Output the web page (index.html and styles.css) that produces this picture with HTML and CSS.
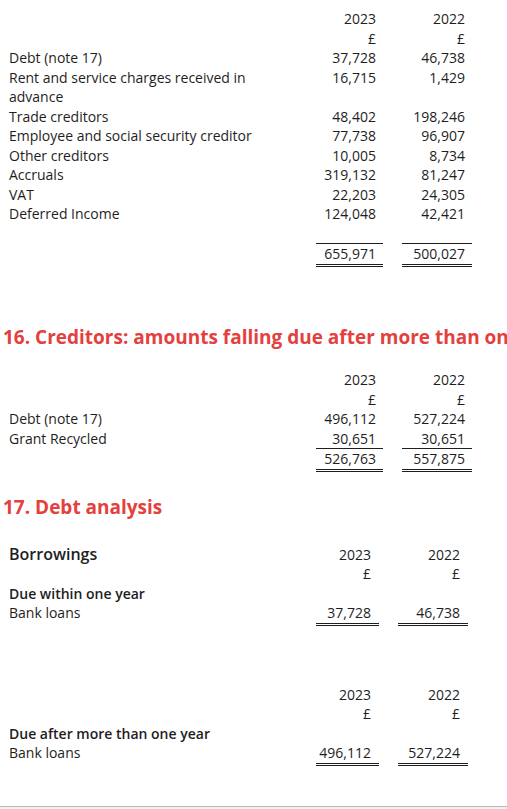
FILE: index.html
```html
<!DOCTYPE html>
<html lang="en">
<head>
<meta charset="utf-8">
<title>Creditors and debt analysis</title>
<link rel="stylesheet" href="styles.css">
</head>
<body>
<div class="page">
  <table class="fin fin-a">
    <tr><td class="label"></td><td class="spacer"></td><td class="num">2023</td><td class="gap"></td><td class="num n2">2022</td></tr>
    <tr><td class="label"></td><td class="spacer"></td><td class="num">£</td><td class="gap"></td><td class="num n2">£</td></tr>
    <tr><td class="label">Debt (note 17)</td><td class="spacer"></td><td class="num">37,728</td><td class="gap"></td><td class="num n2">46,738</td></tr>
    <tr><td class="label">Rent and service charges received in advance</td><td class="spacer"></td><td class="num">16,715</td><td class="gap"></td><td class="num n2">1,429</td></tr>
    <tr><td class="label">Trade creditors</td><td class="spacer"></td><td class="num">48,402</td><td class="gap"></td><td class="num n2">198,246</td></tr>
    <tr><td class="label">Employee and social security creditor</td><td class="spacer"></td><td class="num">77,738</td><td class="gap"></td><td class="num n2">96,907</td></tr>
    <tr><td class="label">Other creditors</td><td class="spacer"></td><td class="num">10,005</td><td class="gap"></td><td class="num n2">8,734</td></tr>
    <tr><td class="label">Accruals</td><td class="spacer"></td><td class="num">319,132</td><td class="gap"></td><td class="num n2">81,247</td></tr>
    <tr><td class="label">VAT</td><td class="spacer"></td><td class="num">22,203</td><td class="gap"></td><td class="num n2">24,305</td></tr>
    <tr><td class="label">Deferred Income</td><td class="spacer"></td><td class="num">124,048</td><td class="gap"></td><td class="num n2">42,421</td></tr>
    <tr><td class="label"></td><td class="spacer"></td><td class="num"></td><td class="gap"></td><td class="num n2"></td></tr>
    <tr class="total"><td class="label"></td><td class="spacer"></td><td class="num">655,971</td><td class="gap"></td><td class="num n2">500,027</td></tr>
  </table>

  <h2 class="section-title s16">16. Creditors: amounts falling due after more than one year</h2>

  <table class="fin fin-b">
    <tr><td class="label"></td><td class="spacer"></td><td class="num">2023</td><td class="gap"></td><td class="num n2">2022</td></tr>
    <tr><td class="label"></td><td class="spacer"></td><td class="num">£</td><td class="gap"></td><td class="num n2">£</td></tr>
    <tr><td class="label">Debt (note 17)</td><td class="spacer"></td><td class="num">496,112</td><td class="gap"></td><td class="num n2">527,224</td></tr>
    <tr><td class="label">Grant Recycled</td><td class="spacer"></td><td class="num">30,651</td><td class="gap"></td><td class="num n2">30,651</td></tr>
    <tr class="total"><td class="label"></td><td class="spacer"></td><td class="num">526,763</td><td class="gap"></td><td class="num n2">557,875</td></tr>
  </table>

  <h2 class="section-title s17">17. Debt analysis</h2>

  <table class="fin fin-c">
    <tr class="big"><td class="label strong-lg">Borrowings</td><td class="spacer"></td><td class="num">2023</td><td class="gap"></td><td class="num n2">2022</td></tr>
    <tr><td class="label"></td><td class="spacer"></td><td class="num">£</td><td class="gap"></td><td class="num n2">£</td></tr>
    <tr><td class="label strong">Due within one year</td><td class="spacer"></td><td class="num"></td><td class="gap"></td><td class="num n2"></td></tr>
    <tr class="under"><td class="label">Bank loans</td><td class="spacer"></td><td class="num">37,728</td><td class="gap"></td><td class="num n2">46,738</td></tr>
  </table>

  <table class="fin fin-c fin-d">
    <tr><td class="label"></td><td class="spacer"></td><td class="num">2023</td><td class="gap"></td><td class="num n2">2022</td></tr>
    <tr><td class="label"></td><td class="spacer"></td><td class="num">£</td><td class="gap"></td><td class="num n2">£</td></tr>
    <tr><td class="label strong">Due after more than one year</td><td class="spacer"></td><td class="num"></td><td class="gap"></td><td class="num n2"></td></tr>
    <tr class="under"><td class="label">Bank loans</td><td class="spacer"></td><td class="num">496,112</td><td class="gap"></td><td class="num n2">527,224</td></tr>
  </table>

  <div class="bottom-bar"></div>
</div>
</body>
</html>
```

FILE: styles.css
```css
html, body {
  margin: 0;
  padding: 0;
  background: #ffffff;
}

body {
  font-family: "Open Sans", "Liberation Sans", sans-serif;
  font-size: 14px;
  color: #1e1e1e;
}

.page {
  width: 507px;
  height: 809px;
  overflow: hidden;
  padding-top: 9px;
  box-sizing: border-box;
  display: flex;
  flex-direction: column;
}

.fin {
  border-collapse: collapse;
  margin-left: 9px;
  table-layout: fixed;
  width: 463px;
}

.fin td {
  padding: 0;
  line-height: 19.5px;
  height: 19.5px;
  vertical-align: top;
}

.fin .label {
  width: 250px;
}

.fin .spacer {
  width: 57px;
}

.fin .num {
  width: 60px;
  padding-right: 7px;
  text-align: right;
  white-space: nowrap;
}

.fin .gap {
  width: 19px;
}

.fin .n2 {
  width: 63px;
}

.fin .total .num {
  border-top: 1px solid #1e1e1e;
  border-bottom: 3px double #1e1e1e;
}

.fin-c {
  width: 459px;
}

.fin-c .num {
  width: 55px;
  padding-right: 8px;
}

.fin-c .n2 {
  width: 62px;
}

.fin .under .num {
  border-bottom: 3px double #1e1e1e;
}

.strong {
  font-weight: 600;
}

.strong-lg {
  font-weight: 600;
  font-size: 16px;
}

.section-title {
  margin: 0;
  padding-left: 3px;
  font-size: 19px;
  line-height: 24px;
  font-weight: 700;
  color: #e3403e;
  white-space: nowrap;
}

.s16 {
  margin-top: 58.5px;
  margin-bottom: 21px;
}

.s17 {
  margin-top: 23px;
  margin-bottom: 26px;
}

.fin-d {
  margin-top: 59px;
}

.bottom-bar {
  margin-top: auto;
  height: 2px;
  border-top: 1px solid #b8b8b8;
  background: #f0f0f0;
}
```
